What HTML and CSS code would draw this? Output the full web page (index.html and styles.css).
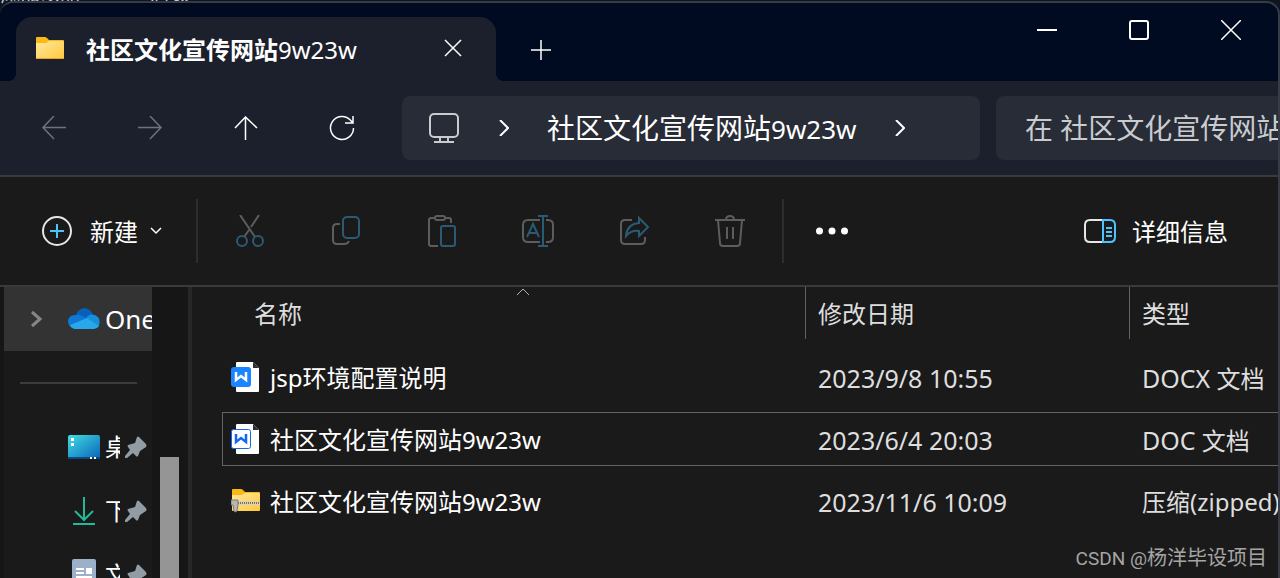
FILE: index.html
```html
<!DOCTYPE html>
<html lang="zh-CN">
<head>
    <meta charset="UTF-8">
    <meta name="viewport" content="width=device-width, initial-scale=1.0">
    <title>社区文化宣传网站9w23w</title>
    <link rel="stylesheet" href="styles.css">
</head>
<body>

<div class="backdrop"><span>添加以品</span><span>店数</span></div>

<div class="window">
    <header class="titlebar">
        <div class="tab">
            <svg width="28" height="24" viewBox="0 0 28 24">
                <defs>
                    <linearGradient id="folder" x1="0" y1="0" x2="1" y2="1">
                        <stop offset="0" stop-color="#ffe8a0"/>
                        <stop offset="1" stop-color="#ffc83a"/>
                    </linearGradient>
                </defs>
                <path d="M0 2q0-1 1-1h8q1 0 2 1l2 2h14q1 0 1 1v17H0z" fill="#fbb917"/>
                <path d="M0 7h10l3-2h14q1 0 1 1v16q0 1-1 1H1q-1 0-1-1z" fill="url(#folder)"/>
                <path d="M0 22.500h28" stroke="#e8a32c"/>
            </svg>
            <h1>社区文化宣传网站<span>9w23w</span></h1>
            <button class="tab-close" aria-label="关闭标签页">
                <svg width="18" height="18" viewBox="0 0 18 18"><path d="M1 1l16 16M17 1L1 17" class="line"/></svg>
            </button>
        </div>
        <button class="tab-new" aria-label="新标签页">
            <svg width="20" height="20" viewBox="0 0 20 20"><path d="M10 0v20M0 10h20" class="line"/></svg>
        </button>
        <div class="window-buttons">
            <button aria-label="最小化">
                <svg width="20" height="20" viewBox="0 0 20 20"><path d="M0 10h20" class="line bold"/></svg>
            </button>
            <button aria-label="最大化">
                <svg width="20" height="20" viewBox="0 0 20 20"><rect x="1" y="1" width="18" height="18" rx="2" class="line bold"/></svg>
            </button>
            <button aria-label="关闭">
                <svg width="20" height="20" viewBox="0 0 20 20"><path d="M0 0l20 20M20 0L0 20" class="line"/></svg>
            </button>
        </div>
    </header>

    <nav class="navbar">
        <button aria-label="后退" disabled>
            <svg width="24" height="24" viewBox="0 0 24 24"><path d="M24 11.500H1M12 0L1 11.500 12 23" class="line"/></svg>
        </button>
        <button aria-label="前进" disabled>
            <svg width="24" height="24" viewBox="0 0 24 24"><path d="M0 11.500h23M12 0l11 11.500L12 23" class="line"/></svg>
        </button>
        <button aria-label="上一级">
            <svg width="24" height="24" viewBox="0 0 24 24"><path d="M11.500 24V1M1 12L11.500 1 23 12" class="line"/></svg>
        </button>
        <button aria-label="刷新">
            <svg width="26" height="26" viewBox="0 0 26 26"><path d="M24.500 13A11.500 11.500 0 1 1 21.500 5.200L24 8M24 1v7h-8" class="line"/></svg>
        </button>
        <div class="address">
            <svg width="30" height="30" viewBox="0 0 30 30" class="pc">
                <rect x="1" y="1" width="28" height="23" rx="4"/>
                <path d="M11 24v4M19 24v4M5 29h20"/>
            </svg>
            <svg width="10" height="16" viewBox="0 0 10 16" class="crumb"><path d="M1 0l8 8-8 8" class="line bold"/></svg>
            <a href="#">社区文化宣传网站<span>9w23w</span></a>
            <svg width="10" height="16" viewBox="0 0 10 16"><path d="M1 0l8 8-8 8" class="line bold"/></svg>
        </div>
        <input class="search" type="text" aria-label="搜索" placeholder="在 社区文化宣传网站9w23w 中搜索">
    </nav>

    <div class="toolbar">
        <button class="new">
            <svg width="30" height="30" viewBox="0 0 30 30">
                <circle cx="15" cy="15" r="14" stroke="#e6e6e6" stroke-width="2" fill="none"/>
                <path d="M15 8v14M8 15h14" stroke="#4cc2ff" stroke-width="2"/>
            </svg>
            <span>新建</span>
            <svg width="12" height="8" viewBox="0 0 12 8"><path d="M1 1l5 5 5-5" class="line"/></svg>
        </button>
        <div class="divider"></div>
        <button class="tool" aria-label="剪切" disabled>
            <svg width="32" height="32" viewBox="0 0 32 32">
                <path d="M6 0l15 22M25 0l-8 12M15 15l-5 7" class="gray"/>
                <circle cx="8" cy="26" r="5" class="blue"/>
                <circle cx="24" cy="26" r="5" class="blue"/>
            </svg>
        </button>
        <button class="tool" aria-label="复制" disabled>
            <svg width="32" height="32" viewBox="0 0 32 32">
                <path d="M10 9H7q-4 0-4 4v12q0 4 4 4h7q4 0 5-3" class="gray"/>
                <rect x="13" y="2" width="16" height="21" rx="4" class="blue"/>
            </svg>
        </button>
        <button class="tool" aria-label="粘贴" disabled>
            <svg width="32" height="32" viewBox="0 0 32 32">
                <path d="M8 3H5q-2 0-2 2v24q0 2 2 2h7M20 3h3q2 0 2 2v3" class="gray"/>
                <rect x="9" y="1" width="10" height="4" rx="2" class="gray"/>
                <rect x="15" y="11" width="14" height="20" rx="2" class="blue"/>
            </svg>
        </button>
        <button class="tool" aria-label="重命名" disabled>
            <svg width="32" height="32" viewBox="0 0 32 32">
                <path d="M18 5H6q-5 0-5 5v12q0 5 5 5h12M24 5h2q5 0 5 5v12q0 5-5 5h-2" class="gray"/>
                <path d="M5 22L11 9l6 13M7 18h8M21 1v30M16 1h10M16 31h10" class="blue"/>
            </svg>
        </button>
        <button class="tool" aria-label="共享" disabled>
            <svg width="32" height="32" viewBox="0 0 32 32">
                <path d="M14 5H7q-4 0-4 4v16q0 4 4 4h16q4 0 4-4v-3" class="gray"/>
                <path d="M21 3l9 9-9 9v-5Q13 15 8 21Q9 9 21 8z" class="blue"/>
            </svg>
        </button>
        <button class="tool" aria-label="删除" disabled>
            <svg width="32" height="32" viewBox="0 0 32 32">
                <path d="M1 5h30M12 5q0-4 4-4t4 4M4 5l2 23q0 3 3 3h14q3 0 3-3l2-23M13 12v12M19 12v12" class="gray"/>
            </svg>
        </button>
        <div class="divider"></div>
        <button class="tool" aria-label="更多">
            <svg width="32" height="8" viewBox="0 0 32 8" fill="#fff">
                <circle cx="3.500" cy="4" r="3.500"/><circle cx="16" cy="4" r="3.500"/><circle cx="28.500" cy="4" r="3.500"/>
            </svg>
        </button>
        <button class="details">
            <svg width="32" height="24" viewBox="0 0 32 24" fill="none" stroke-width="2">
                <path d="M19 1H6Q1 1 1 6v12q0 5 5 5h13" stroke="#e6e6e6"/>
                <path d="M19 1h7q5 0 5 5v12q0 5-5 5h-7zM22 9h6M22 13h6M22 17h6" stroke="#4cc2ff"/>
            </svg>
            <span>详细信息</span>
        </button>
    </div>

    <div class="content">
        <aside class="sidebar">
            <div class="tree">
                <a href="#" class="item current">
                    <svg width="12" height="18" viewBox="0 0 12 18"><path d="M2 2l8 7-8 7" fill="none" stroke="#868686" stroke-width="3"/></svg>
                    <svg width="32" height="22" viewBox="0 0 32 22" class="icon">
                        <path d="M8 8C10-2 22-2 25 7L18 14z" fill="#0a5fb8"/>
                        <path d="M7 7c5-1 8 1 12 4L4 20C-3 15 0 7 7 7z" fill="#0f78d4"/>
                        <path d="M18 10c3-4 6-4 8-3 6 1 7 8 4 12z" fill="#1490df"/>
                        <path d="M2 17L19 10l12 8q-2 3-5 3H7q-3 0-5-4z" fill="#28a8ea"/>
                    </svg>
                    <span>OneDrive</span>
                </a>
                <hr>
                <a href="#" class="item pinned">
                    <svg width="32" height="24" viewBox="0 0 32 24" class="icon">
                        <defs>
                            <linearGradient id="desk" x1="0" y1="0" x2="1" y2="1">
                                <stop offset="0" stop-color="#3fdde4"/>
                                <stop offset="1" stop-color="#0a63b8"/>
                            </linearGradient>
                        </defs>
                        <rect width="32" height="24" rx="2" fill="url(#desk)"/>
                        <path d="M0 22h32v1q0 1-1 1H1q-1 0-1-1z" fill="#0b4a80"/>
                        <path d="M3 3h3v3H3zM3 8h3v3H3zM22 22h2v2h-2zM26 22h2v2h-2z" fill="#fff"/>
                    </svg>
                    <span>桌面</span>
                    <svg width="22" height="22" viewBox="0 0 22 22" class="pin"><path d="M12 1q1-1 2 0l7 7q1 2 0 3l-6 4-2 5q-1 1-2 0l-3-3-6 5H0v-2l5-6-2-3q-1-1 0-2l7-2z"/></svg>
                </a>
                <a href="#" class="item pinned">
                    <svg width="32" height="28" viewBox="0 0 32 28" class="icon">
                        <path d="M16 0v22M7 14l9 9 9-9M5 27h22" fill="none" stroke="#22b99a" stroke-width="2"/>
                    </svg>
                    <span>下载</span>
                    <svg width="22" height="22" viewBox="0 0 22 22" class="pin"><path d="M12 1q1-1 2 0l7 7q1 2 0 3l-6 4-2 5q-1 1-2 0l-3-3-6 5H0v-2l5-6-2-3q-1-1 0-2l7-2z"/></svg>
                </a>
                <a href="#" class="item pinned">
                    <svg width="32" height="32" viewBox="0 0 32 32" class="icon">
                        <rect x="4" width="24" height="32" rx="2" fill="#9db0c9"/>
                        <path d="M8 9h8v2H8zM8 13h8v2H8zM18 9h6v6h-6zM8 17h16v2H8z" fill="#fff"/>
                    </svg>
                    <span>文档</span>
                    <svg width="22" height="22" viewBox="0 0 22 22" class="pin"><path d="M12 1q1-1 2 0l7 7q1 2 0 3l-6 4-2 5q-1 1-2 0l-3-3-6 5H0v-2l5-6-2-3q-1-1 0-2l7-2z"/></svg>
                </a>
            </div>
            <div class="scrollbar"><div class="thumb"></div></div>
        </aside>

        <main class="files">
            <table>
                <colgroup>
                    <col class="col-name">
                    <col class="col-date">
                    <col class="col-type">
                </colgroup>
                <thead>
                <tr>
                    <th>
                        <div>名称</div>
                        <svg width="14" height="8" viewBox="0 0 14 8" class="sort"><path d="M1 7l6-6 6 6"/></svg>
                    </th>
                    <th><div>修改日期</div></th>
                    <th><div>类型</div></th>
                </tr>
                </thead>
                <tbody>
                <tr>
                    <td>
                        <div class="name">
                            <svg width="30" height="32" viewBox="0 0 30 32">
                                <path d="M5 2q0-1 1-1h16l6 6v23q0 1-1 1H6q-1 0-1-1z" fill="#fff"/>
                                <path d="M22 1v6h6z" fill="#2b2f38"/>
                                <rect y="6" width="20" height="20" rx="3" fill="#1a85ff"/>
                                <path d="M5 11v8l5-4 5 4v-8" fill="none" stroke="#fff" stroke-width="2.500"/>
                            </svg>
                            <span>jsp环境配置说明</span>
                        </div>
                    </td>
                    <td class="date">2023/9/8 10:55</td>
                    <td><span class="ext">DOCX</span> 文档</td>
                </tr>
                <tr class="focused">
                    <td>
                        <div class="name">
                            <svg width="30" height="32" viewBox="0 0 30 32">
                                <path d="M5 2q0-1 1-1h16l6 6v23q0 1-1 1H6q-1 0-1-1z" fill="#fff"/>
                                <path d="M22 1v6h6z" fill="#2b2f38"/>
                                <rect x=".5" y="6.500" width="19" height="19" rx="2" fill="#fff" stroke="#1268f0"/>
                                <path d="M5 11v8l5-4 5 4v-8" fill="none" stroke="#1268f0" stroke-width="2.500"/>
                            </svg>
                            <span>社区文化宣传网站9w23w</span>
                        </div>
                    </td>
                    <td class="date">2023/6/4 20:03</td>
                    <td><span class="ext">DOC</span> 文档</td>
                </tr>
                <tr>
                    <td>
                        <div class="name">
                            <svg width="30" height="32" viewBox="0 0 30 32">
                                <path d="M1 5q0-1 1-1h8q1 0 2 1l2 2h14q1 0 1 1v17H1z" fill="#fbb917"/>
                                <path d="M1 10h10l3-2h14q1 0 1 1v16q0 1-1 1H2q-1 0-1-1z" fill="url(#folder)"/>
                                <path d="M6 16h23v4H6z" fill="#d9d2b8"/>
                                <path d="M7 18h22" stroke="#77705c" stroke-width="2" stroke-dasharray="1 1"/>
                                <path d="M0 15h7v5l-1 6q-2 2-3 0l-1-6H0z" fill="#b9b6b0" stroke="#7d7a74"/>
                            </svg>
                            <span>社区文化宣传网站9w23w</span>
                        </div>
                    </td>
                    <td class="date">2023/11/6 10:09</td>
                    <td>压缩(zipped)文件夹</td>
                </tr>
                </tbody>
            </table>
        </main>
    </div>
</div>

<div class="watermark"><span>CSDN @</span>杨洋毕设项目</div>

</body>
</html>
```
FILE: styles.css
```css
* {
    box-sizing: border-box;
}

body {
    margin: 0;
    height: 100vh;
    overflow: hidden;
    display: flex;
    flex-direction: column;
    background: #0d1620;
    color: #fff;
    font-family: "Noto Sans", "Noto Sans CJK SC", sans-serif;
    font-size: 24px;
    line-height: 32px;
}

button {
    display: flex;
    align-items: center;
    justify-content: center;
    padding: 0;
    border: 0;
    background: none;
    color: inherit;
    font: inherit;
}

a {
    color: inherit;
    text-decoration: none;
}

svg {
    flex: none;
}

.line {
    fill: none;
    stroke: currentColor;
    stroke-width: 1.5;
}

.bold {
    stroke-width: 2;
}

/* desktop text showing above the window */
.backdrop {
    display: flex;
    align-items: flex-end;
    gap: 70px;
    height: 1px;
    color: #c8c8c8;
    font-size: 20px;
    line-height: 12px;
}

.window {
    flex: 1;
    min-height: 0;
    display: flex;
    flex-direction: column;
    overflow: hidden;
    position: relative;
    border: 2px solid #363b46;
    border-width: 2px 2px 0 0;
    border-radius: 14px 14px 0 0;
    background: #1a1a1a;
}

/* title bar */
.titlebar {
    display: flex;
    flex: none;
    height: 78px;
    background: #000a20;
}

.tab {
    display: flex;
    align-items: center;
    position: relative;
    width: 480px;
    margin: 14px 0 0 16px;
    padding: 0 34px 2px 20px;
    border-radius: 16px 16px 0 0;
    background: #1c202c;
}

.tab::before,
.tab::after {
    content: "";
    position: absolute;
    bottom: 0;
    width: 8px;
    height: 8px;
}

.tab::before {
    left: -8px;
    background: radial-gradient(circle at 0 0, transparent 8px, #1c202c 8px);
}

.tab::after {
    right: -8px;
    background: radial-gradient(circle at 100% 0, transparent 8px, #1c202c 8px);
}

.tab h1 {
    flex: 1;
    margin: 4px 0 0 22px;
    font-size: 24px;
    font-weight: bold;
}

.tab h1 span {
    font-weight: normal;
}

.tab-new {
    width: 90px;
    margin-top: 16px;
}

.window-buttons {
    display: flex;
    height: 54px;
    margin-left: auto;
    padding-right: 1px;
}

.window-buttons button {
    width: 92px;
}

/* navigation */
.navbar {
    display: flex;
    flex: none;
    height: 96px;
    padding: 15px 0 15px 6px;
    border-bottom: 2px solid #3a3a3a;
    background: #1b202c;
}

.navbar button {
    width: 96px;
    flex: none;
}

.navbar button:disabled {
    color: #70737b;
}

.address {
    display: flex;
    flex: 1;
    align-items: center;
    min-width: 0;
    margin-left: 12px;
    padding-left: 27px;
    border-radius: 8px;
    background: #272c37;
    font-size: 28px;
}

.address .pc {
    fill: none;
    stroke: #c9cbcf;
    stroke-width: 2;
}

.address .crumb {
    margin: 0 38px 0 40px;
}

.address a {
    margin-right: 38px;
}

.address span {
    font-size: 26px;
}

.search {
    flex: none;
    width: 282px;
    margin-left: 16px;
    padding: 0 0 0 29px;
    border: 0;
    border-radius: 8px 0 0 8px;
    background: #272c37;
    color: #fff;
    font: inherit;
    font-size: 28px;
}

.search::placeholder {
    color: #c9cbcf;
}

/* command bar */
.toolbar {
    display: flex;
    flex: none;
    align-items: center;
    height: 110px;
    padding: 0 50px 0 42px;
    border-bottom: 2px solid #3a3a3a;
}

.toolbar span,
.name span {
    padding-top: 2px;
}

.new {
    width: 120px;
    justify-content: space-between;
}

.new svg:first-child {
    margin-right: 6px;
}

.divider {
    width: 2px;
    height: 64px;
    margin: 0 4px 0 34px;
    background: #2d2d2d;
}

.tool {
    width: 96px;
    height: 64px;
}

.tool + .divider {
    margin: 0 0 0 4px;
}

.gray,
.blue {
    fill: none;
    stroke: #5d5d5d;
    stroke-width: 2;
}

.blue {
    stroke: #2a5a74;
}

.details {
    gap: 16px;
    margin-left: auto;
}

/* sidebar */
.content {
    display: flex;
    flex: 1;
    min-height: 0;
}

.sidebar {
    display: flex;
    flex: none;
    width: 192px;
    padding-left: 4px;
    border-right: 4px solid #272727;
    background: #161616;
}

.tree {
    width: 148px;
    overflow: hidden;
    background: #1a1a1a;
}

.item {
    display: flex;
    align-items: center;
    height: 64px;
    padding-left: 64px;
}

.item.current {
    padding-left: 26px;
    background: #333;
    font-size: 26px;
}

.current .icon {
    margin-left: 26px;
}

.item span {
    margin-left: 5px;
    overflow: hidden;
    white-space: nowrap;
}

.pinned span {
    width: 15px;
}

.pin {
    margin-left: 5px;
    fill: #929ca5;
}

.tree hr {
    height: 2px;
    margin: 31px 15px 31px 16px;
    border: 0;
    background: #3c3c3c;
}

.scrollbar {
    width: 19px;
    margin-left: 8px;
    padding-top: 170px;
}

.thumb {
    height: 100%;
    background: #959595;
}

/* file list */
.files {
    flex: 1;
    min-width: 0;
    padding-left: 30px;
    overflow: hidden;
}

table {
    width: 100%;
    margin-top: -8px;
    table-layout: fixed;
    border-spacing: 0 8px;
    white-space: nowrap;
}

.col-name {
    width: 583px;
}

.col-date {
    width: 324px;
}

th {
    position: relative;
    height: 55px;
    padding: 0;
    vertical-align: top;
    color: #dedede;
    font-weight: normal;
    text-align: left;
}

th div {
    height: 52px;
    padding-left: 12px;
    border-left: 1px solid #636363;
    line-height: 54px;
}

th:first-child div {
    padding-left: 31px;
    border-color: transparent;
}

.sort {
    position: absolute;
    top: 1px;
    left: 294px;
    fill: none;
    stroke: #b4b4b4;
}

td {
    height: 54px;
    padding: 2px 0 0 13px;
    border: 1px solid transparent;
    border-width: 1px 0;
    color: #dedede;
}

td:first-child {
    padding: 0 0 0 8px;
    border-left-width: 1px;
    color: #fff;
}

.date,
.ext {
    font-size: 25px;
}

.focused td {
    border-color: #636363;
}

.name {
    display: flex;
    align-items: center;
    gap: 9px;
}

.watermark {
    position: absolute;
    right: 13px;
    bottom: 3px;
    color: #a5a5a5;
    font-family: Roboto, "Noto Sans CJK SC", sans-serif;
    font-size: 20px;
}

.watermark span {
    font-size: 19px;
}
```
